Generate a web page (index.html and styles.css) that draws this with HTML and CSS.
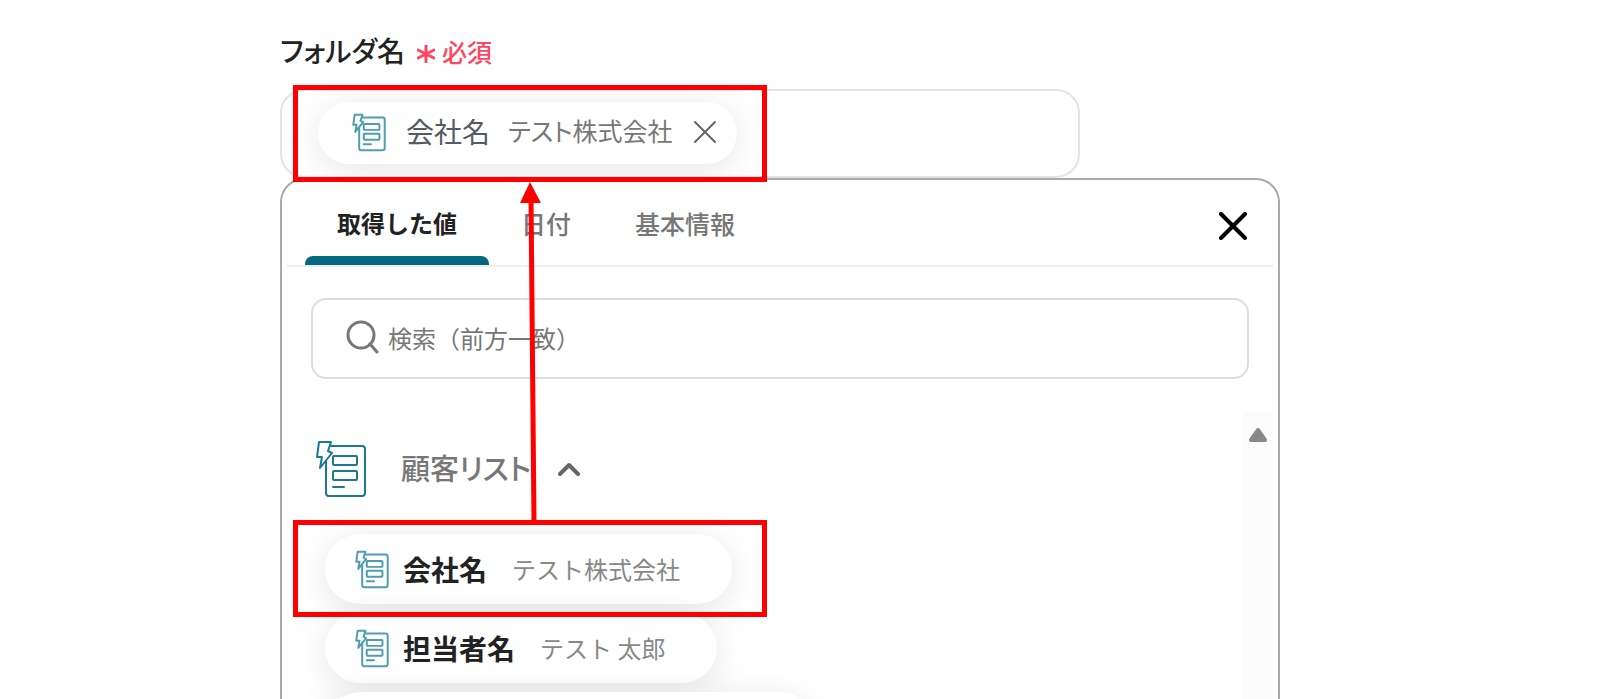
FILE: index.html
```html
<!DOCTYPE html>
<html lang="ja">
<head>
  <meta charset="UTF-8">
  <title>フォルダ名</title>
  <link rel="stylesheet" href="styles.css">
</head>
<body>

  <!-- 共通アイコン -->
  <svg class="defs" width="0" height="0">
    <symbol id="icon-record" viewBox="0 0 52 58">
      <rect x="11" y="6" width="39" height="50" rx="3"/>
      <rect x="18" y="16" width="24" height="9" rx="1"/>
      <rect x="18" y="31" width="24" height="9" rx="1"/>
      <path d="M18 47h11"/>
      <path class="bolt" d="M4 2h12l-3 9 4 2L5 28l2-11H2z"/>
    </symbol>
  </svg>

  <main class="page">
    <div class="label">
      <span class="label-text">フォルダ名</span>
      <svg class="asterisk" viewBox="0 0 18 18"><path d="M9 1v16M1 5l16 8M17 5L1 13"/></svg>
      <span class="required">必須</span>
    </div>

    <div class="field">
      <div class="chip selected">
        <svg class="icon-small"><use href="#icon-record"/></svg>
        <span class="chip-name">会社名</span>
        <span class="chip-value">テスト株式会社</span>
        <button class="remove" type="button" aria-label="削除">
          <svg width="24" height="24" viewBox="0 0 24 24"><path d="M2 2l20 20M22 2L2 22"/></svg>
        </button>
      </div>
      <div class="highlight"></div>
    </div>

    <section class="panel">
      <div class="tabs">
        <button class="tab active" type="button">取得した値</button>
        <button class="tab" type="button">日付</button>
        <button class="tab" type="button">基本情報</button>
        <button class="close" type="button" aria-label="閉じる">
          <svg width="28" height="28" viewBox="0 0 28 28"><path d="M2 2l24 24M26 2L2 26"/></svg>
        </button>
      </div>

      <label class="search">
        <svg width="34" height="34" viewBox="0 0 34 34"><circle cx="16" cy="15" r="13"/><path d="M25 24l7 8"/></svg>
        <input type="text" placeholder="検索（前方一致）" aria-label="検索">
      </label>

      <div class="body">
        <div class="list">
          <button class="group" type="button">
            <svg class="icon-large"><use href="#icon-record"/></svg>
            <span>顧客リスト</span>
            <svg class="caret" width="22" height="16" viewBox="0 0 22 16"><path d="M2 13l9-9 9 9"/></svg>
          </button>
          <div class="item">
            <button class="chip" type="button">
              <svg class="icon-small"><use href="#icon-record"/></svg>
              <span class="chip-name">会社名</span>
              <span class="chip-value">テスト株式会社</span>
            </button>
            <div class="highlight"></div>
          </div>
          <div class="item">
            <button class="chip" type="button">
              <svg class="icon-small"><use href="#icon-record"/></svg>
              <span class="chip-name">担当者名</span>
              <span class="chip-value">テスト 太郎</span>
            </button>
          </div>
          <div class="item">
            <button class="chip wide" type="button" aria-label="項目"></button>
          </div>
        </div>
        <div class="scrollbar">
          <svg width="20" height="16" viewBox="0 0 20 16"><path d="M10 3l7 10H3z"/></svg>
        </div>
      </div>

      <svg class="arrow" width="24" height="340" viewBox="0 0 24 340">
        <path class="shaft" d="M12 15L15 340"/>
        <path class="head" d="M11 0l11 21H1z"/>
      </svg>
    </section>
  </main>

</body>
</html>
```
FILE: styles.css
```css
* { box-sizing: border-box; }
body { margin: 0; background: #fff; font-family: "Noto Sans CJK JP", sans-serif; color: #222; }
button { margin: 0; padding: 0; border: 0; background: none; font: inherit; color: inherit; cursor: pointer; }
svg { display: block; flex: none; fill: none; stroke-linecap: round; stroke-linejoin: round; }
.defs { position: absolute; }

.page { display: flex; flex-direction: column; height: 100vh; padding: 30px 20% 0 17.5%; overflow: hidden; }

.label { display: flex; align-items: center; height: 40px; margin-bottom: 19px; font-weight: 700; font-feature-settings: "palt"; }
.label-text { font-size: 28px; font-weight: 500; }
.asterisk { width: 18px; height: 18px; margin: 8px 7px 0 12px; stroke: #ff4560; stroke-width: 3; }
.required { padding-top: 2px; font-size: 25px; font-weight: 500; color: #ff4560; }

.field { position: relative; display: flex; align-items: center; width: 80%; height: 89px; padding: 0 36px 2px; border: 2px solid #e1e5ea; border-radius: 24px; }

.chip { display: flex; align-items: center; height: 70px; padding: 0 52px 0 30px; border-radius: 35px; background: #fff; box-shadow: 0 6px 36px rgba(0, 0, 0, 0.1); white-space: nowrap; }
.chip-name { margin: 0 25px 0 14px; font-size: 28px; font-weight: 700; color: #222; }
.chip-value { padding-bottom: 2px; font-size: 24px; color: #888; }
.chip.wide { width: 490px; }
.icon-small { width: 34px; height: 39px; stroke: #4f9db0; stroke-width: 3; }
.icon-large { width: 52px; height: 58px; stroke: #1b7a90; stroke-width: 2; }
.bolt { fill: #fff; }

.selected { height: 62px; padding: 0 20px 0 34px; font-feature-settings: "palt"; }
.selected .chip-name { margin: 0 18px 0 20px; padding-bottom: 3px; font-weight: 400; color: #555b63; }
.selected .chip-value { padding-bottom: 5px; font-size: 25px; color: #777; }
.remove { margin-left: 21px; padding-bottom: 2px; stroke: #666; stroke-width: 2; }

.panel { position: relative; flex: 1; display: flex; flex-direction: column; min-height: 0; border: 2px solid #aaa; border-bottom: 0; border-radius: 24px 24px 0 0; background: #fff; }

.tabs { display: flex; height: 87px; margin: 0 5px; padding: 0 26px 0 18px; border-bottom: 2px solid #eee; }
.tab { padding: 9px 32px 0; border-bottom: 9px solid transparent; font-size: 25px; font-weight: 500; color: #777; }
.tab.active { position: relative; font-size: 24px; font-weight: 700; color: #222; }
.tab.active::after { content: ""; position: absolute; left: 0; right: 0; bottom: -9px; height: 9px; border-radius: 8px 8px 0 0; background: #04687f; }
.close { margin-left: auto; padding-top: 6px; stroke: #000; stroke-width: 4; }

.search { display: flex; align-items: center; height: 81px; margin: 31px 29px 33px; padding: 0 32px 3px; border: 2px solid #ddd; border-radius: 15px; stroke: #777; stroke-width: 3; }
.search input { flex: 1; margin-left: 9px; padding: 0; border: 0; outline: 0; background: none; font: inherit; font-size: 24px; color: #222; }
.search input::placeholder { color: #777; opacity: 1; }

.body { flex: 1; display: flex; min-height: 0; margin-right: 5px; overflow: hidden; }
.list { flex: 1; padding: 28px 0 0 33px; }
.group { display: flex; align-items: center; height: 58px; margin-bottom: 36px; font-size: 29px; font-weight: 500; color: #777; font-feature-settings: "palt"; }
.group span { margin: 0 27px 0 34px; padding-bottom: 5px; }
.caret { stroke: #666; stroke-width: 4; }
.item { position: relative; display: flex; margin: 0 0 9px 10px; }
.scrollbar { display: flex; justify-content: center; width: 31px; padding-top: 15px; background: #fbfbfb; }
.scrollbar svg { fill: #888; stroke: #888; stroke-width: 4; }

/* 赤枠と矢印 */
.highlight { position: absolute; z-index: 1; border: 5px solid #f00; }
.field .highlight { left: 11px; top: -6px; width: 474px; height: 97px; }
.item .highlight { left: -32px; top: -14px; width: 474px; height: 97px; }
.arrow { position: absolute; z-index: 2; left: 237px; top: 2px; }
.shaft { stroke: #f00; stroke-width: 5; stroke-linecap: butt; }
.head { fill: #f00; }
```
